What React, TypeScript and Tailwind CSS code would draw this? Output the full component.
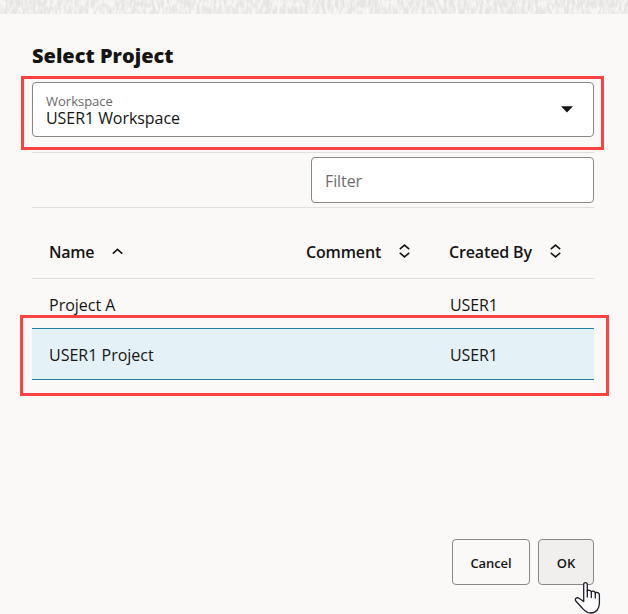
const rows = [
  { name: "Project A", createdBy: "USER1", selected: false },
  { name: "USER1 Project", createdBy: "USER1", selected: true },
];

function SortBoth() {
  return (
    <svg className="mb-[2px]" width="11" height="14" viewBox="0 0 11 14" fill="none" stroke="#161513" strokeWidth="1.6">
      <path d="M0.8 5.2 L5.5 1.1 L10.2 5.2 M0.8 8.8 L5.5 12.9 L10.2 8.8" />
    </svg>
  );
}

function TextureStrip() {
  return (
    <svg className="block h-[14px] w-full shrink-0 bg-[#e6e5e3]" width="628" height="14">
      <filter id="grain" x="0" y="0" width="100%" height="100%" colorInterpolationFilters="sRGB">
        <feTurbulence type="fractalNoise" baseFrequency="0.36 0.13" numOctaves="2" seed="8" />
        <feColorMatrix values="0 0 0 0 0.975  0 0 0 0 0.97  0 0 0 0 0.965  2.8 0 0 0 -1.0" />
      </filter>
      <rect width="628" height="14" filter="url(#grain)" />
    </svg>
  );
}

export default function App() {
  return (
    <div className="relative flex h-[614px] w-[628px] flex-col overflow-hidden bg-[#fbf9f8] font-['Open_Sans','Noto_Sans',sans-serif] text-[#161513]">
      <TextureStrip />
      <main className="flex flex-1 flex-col pr-[34px] pl-8">
        <h1 className="mt-[27px] h-[29px] text-[20px] leading-[30px] font-extrabold whitespace-nowrap">
          Select Project
        </h1>

        <div className="mt-3 flex h-[55px] items-center justify-between rounded-[4px] border border-[#8a8886] bg-white pr-5 pl-[13px]">
          <div className="flex flex-col whitespace-nowrap">
            <span className="h-[17px] text-[13px] leading-[17px] text-[#6b6967]">Workspace</span>
            <span className="h-[17px] text-[16px] leading-[17px] tracking-[-0.06px]">USER1 Workspace</span>
          </div>
          <svg width="12" height="7" viewBox="0 0 12 7"><path d="M0 0.2H12L6 6.5Z" fill="#161513" /></svg>
        </div>

        <div className="mt-[15px] flex h-14 items-center justify-end border-y border-[#e2e0de]">
          <input
            placeholder="Filter"
            className="h-[46px] w-[283px] rounded-[4px] border border-[#8a8886] bg-white px-[13px] pt-[2px] text-[16px] tracking-[-0.1px] outline-none placeholder:text-[#6f6d6b]"
          />
        </div>

        <div className="flex h-[71px] items-center border-b border-[#e2e0de] pt-[18px] pl-[17px] text-[16px] font-semibold whitespace-nowrap">
          <div className="flex w-[257px] items-center">
            <span className="w-[63px] tracking-[-0.3px]">Name</span>
            <svg className="mb-[2px]" width="11" height="7" viewBox="0 0 11 7" fill="none" stroke="#161513" strokeWidth="1.6"><path d="M0.8 5.7L5.5 1.3L10.2 5.7" /></svg>
          </div>
          <div className="flex w-[143px] items-center">
            <span className="w-[93px] tracking-[-0.15px]">Comment</span>
            <SortBoth />
          </div>
          <div className="flex items-center">
            <span className="w-[101px] tracking-[-0.15px]">Created By</span>
            <SortBoth />
          </div>
        </div>

        {rows.map((row) => (
          <div
            key={row.name}
            className={
              row.selected
                ? "flex h-[52px] items-center border-y border-[#1f7f9f] bg-[#e4f1f7] pt-[2px] pl-[17px] text-[16px] whitespace-nowrap"
                : "flex h-[49px] items-center pt-[3px] pl-[17px] text-[16px] whitespace-nowrap"
            }
          >
            <span className="w-[401px]">{row.name}</span>
            <span className="tracking-[-0.1px]">{row.createdBy}</span>
          </div>
        ))}

        <div className="mt-auto mb-[29px] flex justify-end gap-2 text-[13px] font-semibold">
          <button className="h-[46px] w-[78px] rounded-[4px] border border-[#8a8886] pt-[3px] tracking-[-0.1px]">Cancel</button>
          <button className="h-[46px] w-14 rounded-[4px] border border-[#8a8886] bg-[#f1efed] pt-[3px]">OK</button>
        </div>
      </main>

      <div className="pointer-events-none absolute top-[76px] left-[21px] h-[74px] w-[583px] border-3 border-[#fc4343]" />
      <div className="pointer-events-none absolute top-[315px] left-5 h-[81px] w-[589px] border-3 border-[#fc4343]" />
      <svg className="pointer-events-none absolute top-[581px] left-[574px]" width="28" height="33" viewBox="0 0 28 33" fill="white" stroke="#1c1c2b" strokeWidth="1.3" strokeLinejoin="round" strokeLinecap="round">
        <path d="M9.7 20.5V3.4C9.7 .9 13.3 .9 13.3 3.4V10C14 8.8 17 9.1 17.3 10.9C18.2 9.6 21 10 21.3 12C22.5 10.8 25.4 11.6 25.4 13.9V22C25.4 28 22 32 16.5 32C12.5 32 10.5 29.5 8 26.8L1.8 20C.3 17.8 3 16 5 17.2L9.7 20.5" />
        <path d="M13.3 9.5V16M17.3 10.9V16.5M21.3 12V17" fill="none" />
      </svg>
    </div>
  );
}
